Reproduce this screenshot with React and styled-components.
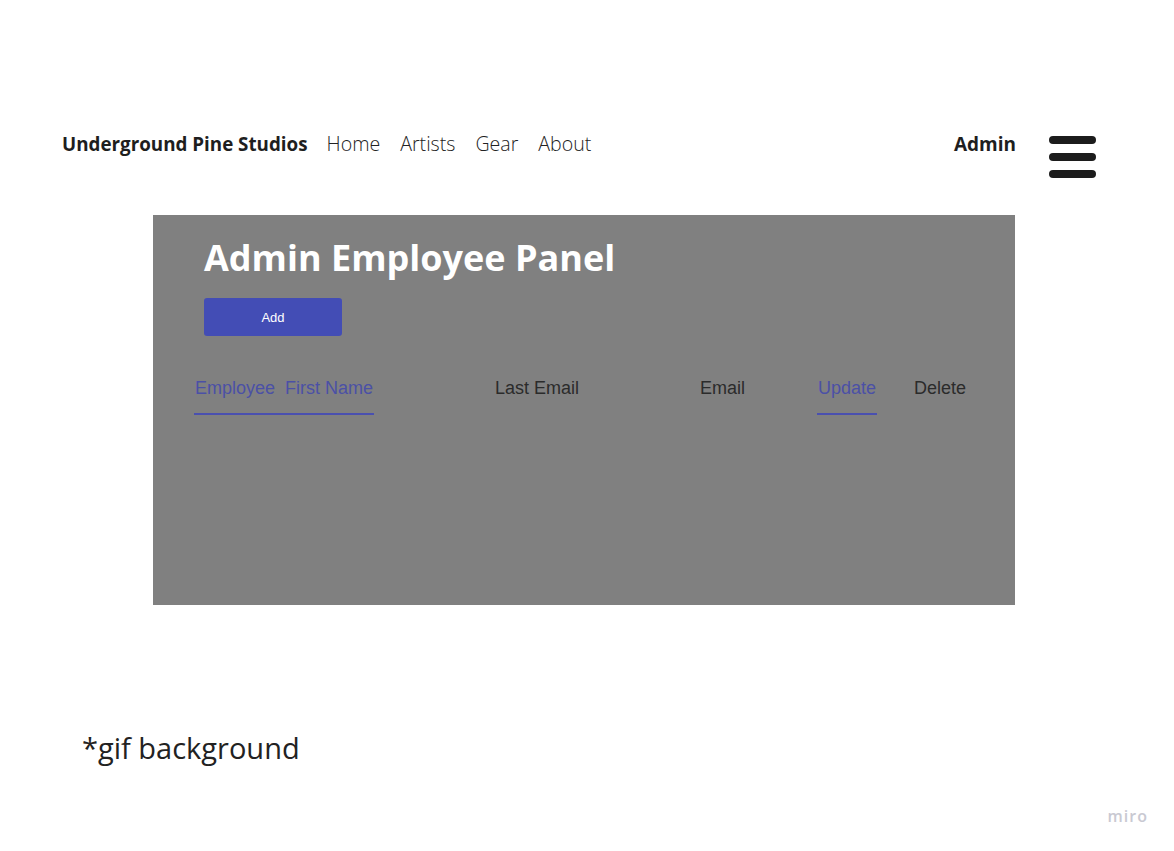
import React from "react";
import styled, { createGlobalStyle } from "styled-components";

const GlobalStyle = createGlobalStyle`
  html, body {
    margin: 0;
    padding: 0;
    background: #fff;
    font-family: "Open Sans", "Liberation Sans", sans-serif;
  }
`;

const Page = styled.div`
  width: 1174px;
  height: 851px;
  position: relative;
  box-sizing: border-box;
  padding-top: 127px;
  overflow: hidden;
`;

const Header = styled.header`
  display: flex;
  align-items: flex-start;
  padding: 0 78px 0 62px;
  height: 88px;
`;

const Brand = styled.div`
  font-size: 18.8px;
  font-weight: 700;
  color: #1e1e1e;
  line-height: 34px;
  margin-right: 19px;
`;

const NavLinks = styled.nav`
  display: flex;
  gap: 20px;
`;

const NavLink = styled.a`
  font-size: 19.6px;
  font-weight: 300;
  color: #222;
  line-height: 34px;
  text-decoration: none;
`;

const AdminLabel = styled.div`
  margin-left: auto;
  font-size: 19px;
  font-weight: 700;
  color: #1e1e1e;
  line-height: 34px;
  margin-right: 33px;
`;

const Burger = styled.div`
  display: flex;
  flex-direction: column;
  gap: 9px;
  padding-top: 9px;
  span {
    display: block;
    width: 47px;
    height: 8px;
    border-radius: 4px;
    background: #1c1c1c;
  }
`;

const Panel = styled.section`
  margin-left: 153px;
  width: 862px;
  height: 390px;
  background: #808080;
  box-sizing: border-box;
  padding: 18px 0 0 0;
`;

const Title = styled.h1`
  margin: 0 0 16px 51px;
  font-size: 36px;
  font-weight: 700;
  color: #fff;
  line-height: 49px;
`;

const AddButton = styled.button`
  margin-left: 51px;
  width: 138px;
  height: 38px;
  border: none;
  border-radius: 3px;
  background: #434db5;
  color: #fff;
  font-family: "Liberation Sans", Arial, sans-serif;
  font-size: 13px;
  cursor: pointer;
`;

const TableHead = styled.div`
  display: grid;
  grid-template-columns: 300px 205px 118px 96px auto;
  padding-left: 41px;
  margin-top: 32px;
`;

const HeadCell = styled.div`
  font-family: "Liberation Sans", Arial, sans-serif;
  font-size: 18px;
  line-height: 40px;
  color: ${(p) => (p.active ? "#4b50a6" : "#2b2b2b")};
  white-space: pre;
  span {
    display: inline-block;
    padding: 0 1px 5px;
    border-bottom: ${(p) => (p.active ? "2px solid #4a50b0" : "2px solid transparent")};
  }
`;

const Note = styled.p`
  margin: 123px 0 0 82px;
  font-size: 29px;
  font-weight: 400;
  color: #222;
  line-height: 40px;
`;

const Watermark = styled.div`
  position: absolute;
  right: 26px;
  bottom: 24px;
  font-size: 16px;
  font-weight: 600;
  letter-spacing: 1px;
  color: #c9c9d2;
`;

const headers = [
  { label: "Employee  First Name", active: true },
  { label: "Last Email" },
  { label: "Email" },
  { label: "Update", active: true },
  { label: "Delete" },
];

const App = () => {
  return (
    <Page>
      <GlobalStyle />
      <Header>
        <Brand>Underground Pine Studios</Brand>
        <NavLinks>
          <NavLink>Home</NavLink>
          <NavLink>Artists</NavLink>
          <NavLink>Gear</NavLink>
          <NavLink>About</NavLink>
        </NavLinks>
        <AdminLabel>Admin</AdminLabel>
        <Burger>
          <span />
          <span />
          <span />
        </Burger>
      </Header>
      <Panel>
        <Title>Admin Employee Panel</Title>
        <AddButton>Add</AddButton>
        <TableHead>
          {headers.map((h) => (
            <HeadCell key={h.label} active={h.active}>
              <span>{h.label}</span>
            </HeadCell>
          ))}
        </TableHead>
      </Panel>
      <Note>*gif background</Note>
      <Watermark>miro</Watermark>
    </Page>
  );
};

export default App;
